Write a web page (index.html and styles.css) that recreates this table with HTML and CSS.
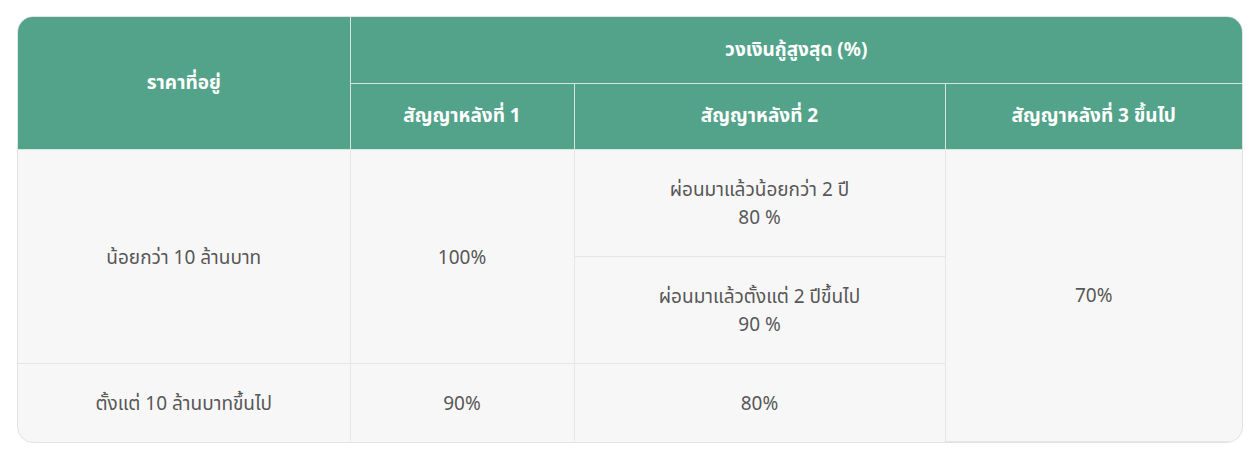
FILE: index.html
```html
<!DOCTYPE html>
<html lang="th">
<head>
<meta charset="utf-8">
<link rel="stylesheet" href="styles.css">
</head>
<body>
<div class="wrap">
  <table class="loan">
    <colgroup>
      <col class="c1"><col class="c2"><col class="c3"><col class="c4">
    </colgroup>
    <thead>
      <tr class="h1">
        <th rowspan="2" class="first">ราคาที่อยู่</th>
        <th colspan="3" class="last">วงเงินกู้สูงสุด (%)</th>
      </tr>
      <tr class="h2">
        <th>สัญญาหลังที่ 1</th>
        <th>สัญญาหลังที่ 2</th>
        <th class="last">สัญญาหลังที่ 3 ขึ้นไป</th>
      </tr>
    </thead>
    <tbody>
      <tr class="r1">
        <td rowspan="2" class="first">น้อยกว่า 10 ล้านบาท</td>
        <td rowspan="2">100%</td>
        <td>ผ่อนมาแล้วน้อยกว่า 2 ปี<br>80 %</td>
        <td rowspan="3" class="last">70%</td>
      </tr>
      <tr class="r2">
        <td>ผ่อนมาแล้วตั้งแต่ 2 ปีขึ้นไป<br>90 %</td>
      </tr>
      <tr class="r3">
        <td class="first bottom">ตั้งแต่ 10 ล้านบาทขึ้นไป</td>
        <td class="bottom">90%</td>
        <td class="bottom">80%</td>
      </tr>
    </tbody>
  </table>
</div>
</body>
</html>
```
FILE: styles.css
```css
html, body { margin: 0; padding: 0; background: #fff; }
body {
  font-family: "Noto Sans", "Noto Sans Thai", "Loma", "Garuda", sans-serif;
  padding: 16px 18px 0 17px;
}
.wrap {
  width: 1224px;
  border: 1px solid #e3e3e3;
  border-radius: 16px;
  overflow: hidden;
  background: #f7f7f7;
}
.loan {
  width: 100%;
  border-collapse: collapse;
  table-layout: fixed;
}
.c1 { width: 332px; }
.c2 { width: 224px; }
.c3 { width: 371px; }
.c4 { width: 297px; }
th {
  background: #53a38a;
  color: #fff;
  font-weight: 700;
  font-size: 19px;
  text-align: center;
  border: 1px solid #d6e6df;
  padding: 0;
}
.h1 th { height: 66px; border-top: none; }
.h2 th { height: 65px; }
td {
  color: #575757;
  font-size: 19px;
  text-align: center;
  line-height: 28px;
  border: 1px solid #e6e6e6;
  padding: 0;
}
.r1 td, .r2 td { height: 106px; }
.r3 td { height: 77px; }
.first { border-left: none; }
.last { border-right: none; }
.bottom { border-bottom: none; }
tbody tr:first-child td { border-top: none; }
```
